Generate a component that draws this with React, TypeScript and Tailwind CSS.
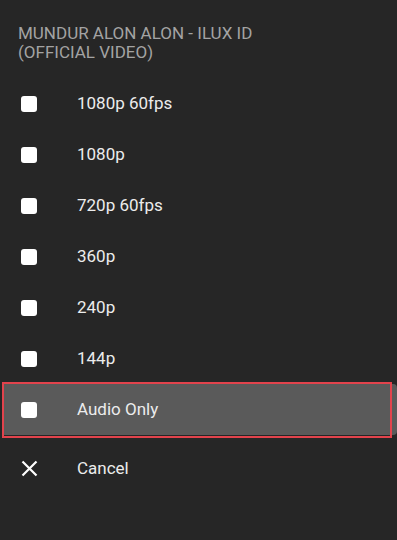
const qualities = ['1080p 60fps', '1080p', '720p 60fps', '360p', '240p', '144p', 'Audio Only'];

const App = () => {
  return (
    <div className="h-[540px] w-full overflow-hidden bg-[#262626] font-['Roboto',sans-serif]">
      <div className="pt-[24px] pl-[18px] pr-4 text-[17px] leading-[19px] text-[#a3a3a3] uppercase">
        Mundur Alon Alon - Ilux ID
        <br />
        (Official Video)
      </div>

      <div className="mt-[16px]">
        {qualities.map((q) => {
          const selected = q === 'Audio Only';
          return (
            <div
              key={q}
              className={`relative flex h-[51px] items-center ${
                selected ? 'ml-[2px] rounded-r-[4px] bg-[#5a5a5a]' : ''
              }`}
            >
              <div className={`h-[16px] w-[16px] rounded-[3px] bg-white ${selected ? 'ml-[19px]' : 'ml-[21px]'}`} />
              <span className="ml-[40px] text-[17px] text-[#ececec]">{q}</span>
              {selected && (
                <div className="pointer-events-none absolute top-[-2px] bottom-[-3px] left-0 right-[5px] border-2 border-[#e2434c]" />
              )}
            </div>
          );
        })}

        <div className="mt-[8px] flex h-[51px] items-center">
          <svg className="ml-[21px] h-[17px] w-[17px]" viewBox="0 0 17 17" fill="none" stroke="white" strokeWidth="2.2">
            <path d="M1.5 1.5 L15.5 15.5 M15.5 1.5 L1.5 15.5" />
          </svg>
          <span className="ml-[39px] text-[17px] text-[#ececec]">Cancel</span>
        </div>
      </div>
    </div>
  );
};

export default App;
